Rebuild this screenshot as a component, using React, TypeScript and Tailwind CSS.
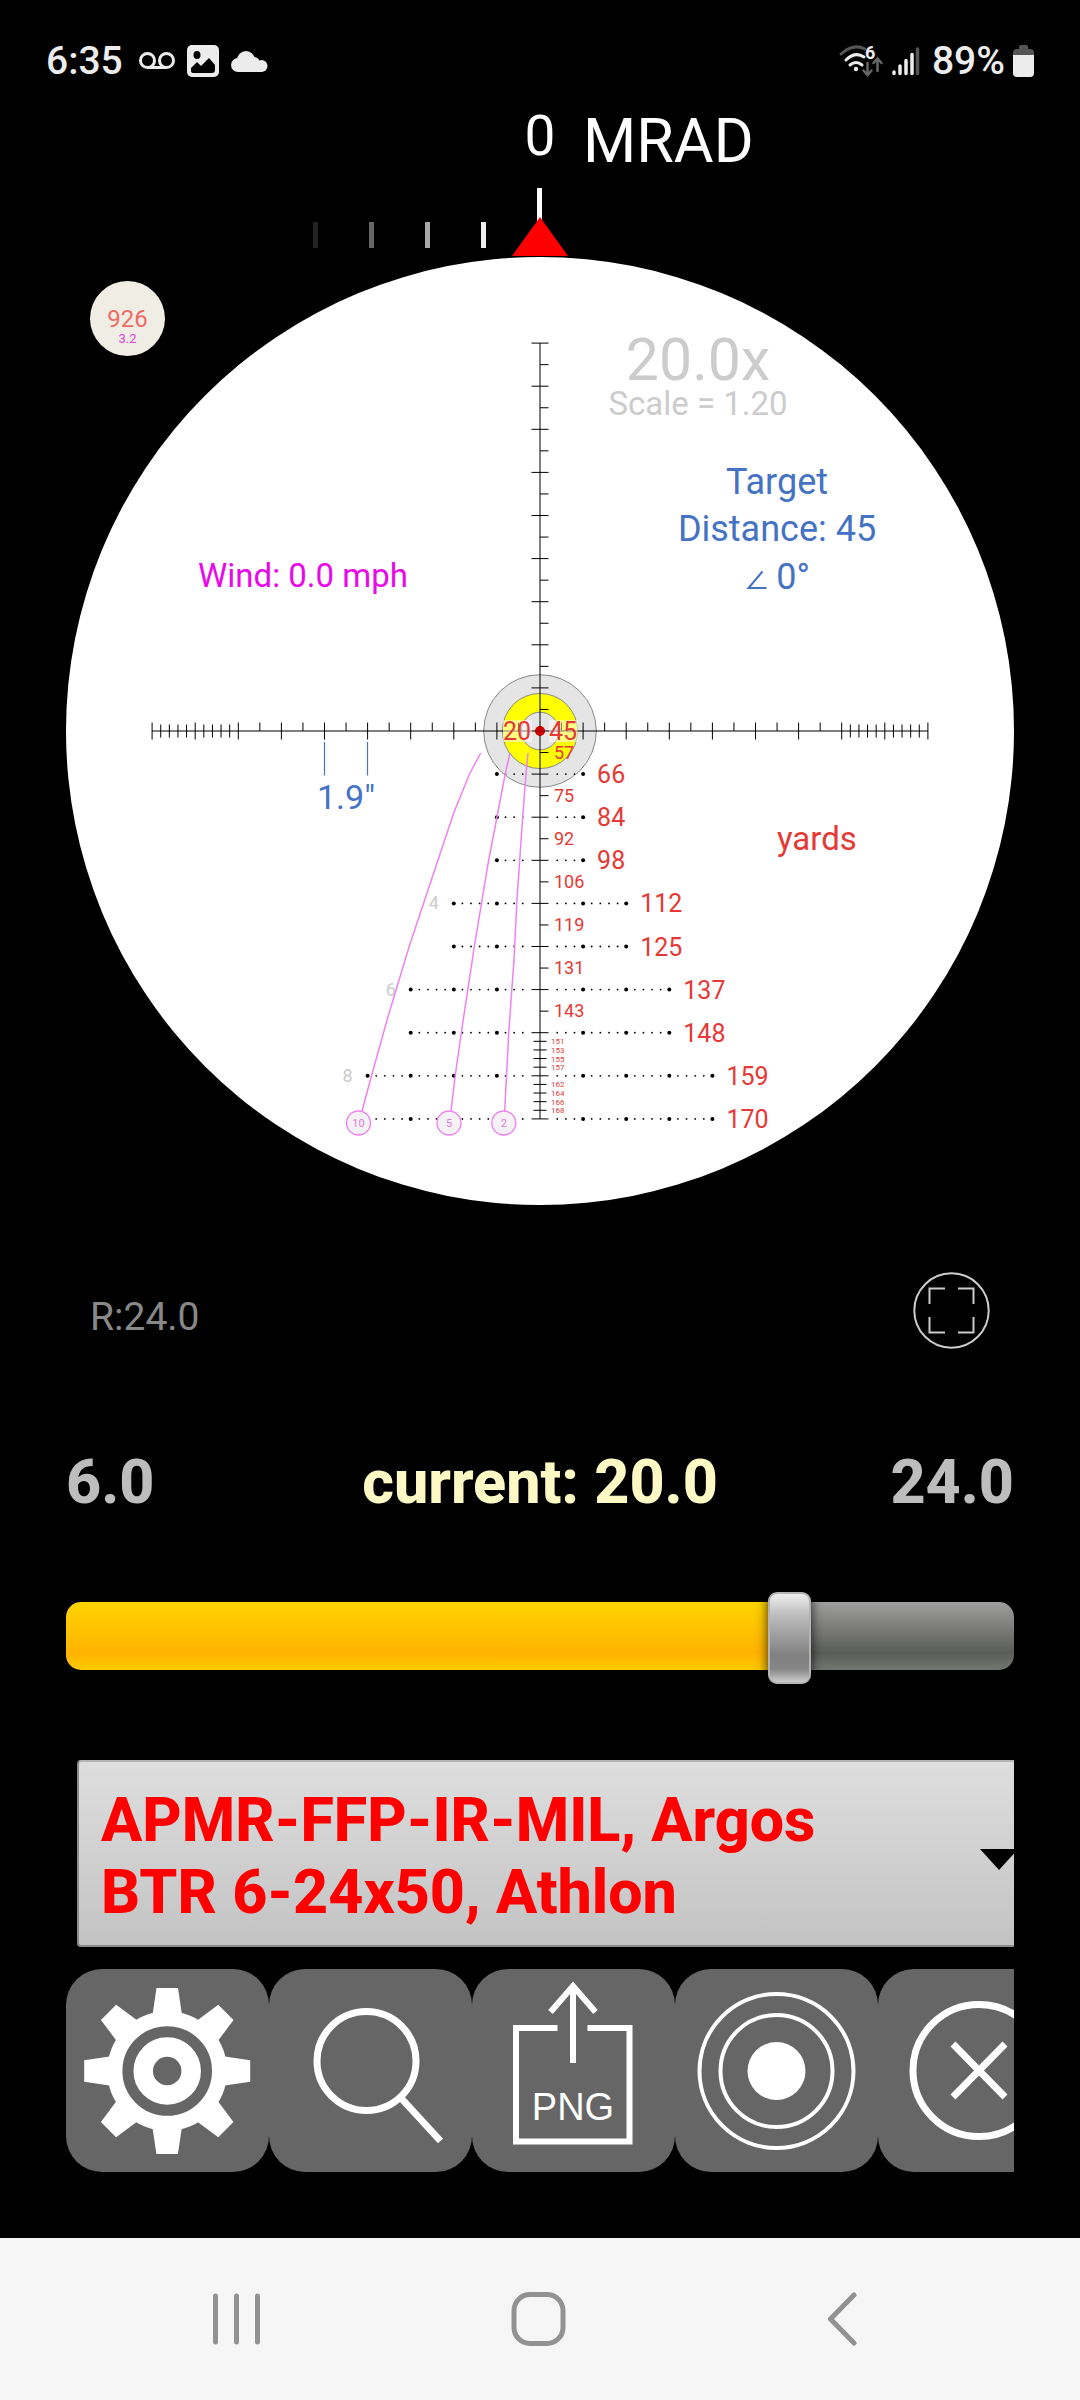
import { useState } from 'react';

const MIL = 43.1;
const CX = 540;
const CY = 731;

const holdovers = [
  { mil: 1, half: 1, range: 66 },
  { mil: 2, half: 1, range: 84 },
  { mil: 3, half: 1, range: 98 },
  { mil: 4, half: 2, range: 112, mark: 4 },
  { mil: 5, half: 2, range: 125 },
  { mil: 6, half: 3, range: 137, mark: 6 },
  { mil: 7, half: 3, range: 148 },
  { mil: 8, half: 4, range: 159, mark: 8 },
  { mil: 9, half: 4, range: 170 },
];

const halfRanges = [57, 75, 92, 106, 119, 131, 143];

const fineRanges = [
  { mil: 7.2, range: 151 },
  { mil: 7.4, range: 153 },
  { mil: 7.6, range: 155 },
  { mil: 7.8, range: 157 },
  { mil: 8.2, range: 162 },
  { mil: 8.4, range: 164 },
  { mil: 8.6, range: 166 },
  { mil: 8.8, range: 168 },
];

const windLines = [
  { mph: 10, x: 358.5, points: '480.7,753 469.5,774 453.7,813 425,899 409.3,946 388,1016.7 371.7,1075 362,1111' },
  { mph: 5, x: 449, points: '510,753 505,775 497,817 488.7,860 474.3,946.7 461.3,1032.7 455.3,1075 451,1111' },
  { mph: 2, x: 503.8, points: '528,753 526,774 522.7,817 517,899 514,960 508.7,1033 504.7,1111' },
];

const reticles = ['APMR-FFP-IR-MIL, Argos BTR 6-24x50, Athlon', 'APLR2-FFP-IR-MIL, Argos BTR 6-24x50, Athlon'];

function Crosshair() {
  const whole = [1, 2, 3, 4, 5, 6, 7, 8, 9];
  const fine = [7.2, 7.4, 7.6, 7.8, 8.2, 8.4, 8.6, 8.8];
  return (
    <g stroke="#000" strokeWidth="1">
      <line x1={CX} y1={CY - 9 * MIL} x2={CX} y2={CY + 9 * MIL} strokeWidth="2" strokeOpacity=".5" />
      <line x1={CX - 9 * MIL} y1={CY} x2={CX + 9 * MIL} y2={CY} strokeWidth="2" strokeOpacity=".5" />
      {whole.map((m) => (
        <g key={m}>
          <line x1="531.5" x2="548.5" y1={CY - m * MIL} y2={CY - m * MIL} />
          <line x1="531.5" x2="548.5" y1={CY + m * MIL} y2={CY + m * MIL} />
          <line y1="722.5" y2="739.5" x1={CX - m * MIL} x2={CX - m * MIL} />
          <line y1="722.5" y2="739.5" x1={CX + m * MIL} x2={CX + m * MIL} />
          <line x1="540" x2="548.5" y1={CY - (m - 0.5) * MIL} y2={CY - (m - 0.5) * MIL} />
          {m < 8 && (
            <>
              <line x1="540" x2="548.5" y1={CY + (m - 0.5) * MIL} y2={CY + (m - 0.5) * MIL} />
              <line y1="722.5" y2="731" x1={CX - (m - 0.5) * MIL} x2={CX - (m - 0.5) * MIL} />
              <line y1="722.5" y2="731" x1={CX + (m - 0.5) * MIL} x2={CX + (m - 0.5) * MIL} />
            </>
          )}
        </g>
      ))}
      {fine.map((m) => (
        <g key={m}>
          <line x1="533.5" x2="546.5" y1={CY + m * MIL} y2={CY + m * MIL} />
          <line y1="724.5" y2="737.5" x1={CX - m * MIL} x2={CX - m * MIL} />
          <line y1="724.5" y2="737.5" x1={CX + m * MIL} x2={CX + m * MIL} />
        </g>
      ))}
    </g>
  );
}

function HoldoverRow({ mil, half, range, mark }: { mil: number; half: number; range: number; mark?: number }) {
  const y = CY + mil * MIL;
  const dots: number[] = [];
  for (let i = 2; i <= half * 5; i++) dots.push(i);
  return (
    <g>
      {dots.map((i) => {
        const r = i % 5 === 0 ? 2 : 0.9;
        return (
          <g key={i}>
            <circle cx={CX - (i / 5) * MIL} cy={y} r={r} />
            <circle cx={CX + (i / 5) * MIL} cy={y} r={r} />
          </g>
        );
      })}
      <text x={CX + half * MIL + 14} y={y + 9} fontSize="25" fill="#e53935">{range}</text>
      {mark && (
        <text x={CX - half * MIL - 20} y={y + 6} fontSize="18" fill="#ccc" textAnchor="middle">{mark}</text>
      )}
    </g>
  );
}

function Scope() {
  return (
    <svg viewBox="0 104 1080 1106" className="block w-full" fontFamily="Roboto, sans-serif" role="img" aria-label="Reticle view">
      {/* turret scale */}
      <text x="540" y="155" fontSize="55" fill="#fff" textAnchor="middle">0</text>
      <text x="583" y="162" fontSize="61" fill="#fff">MRAD</text>
      <rect x="313" y="222" width="5" height="26" fill="#222" />
      <rect x="369" y="222" width="5" height="26" fill="#666" />
      <rect x="425" y="222" width="5" height="26" fill="#a8a8a8" />
      <rect x="481" y="222" width="5" height="26" fill="#eee" />
      <rect x="537" y="188" width="5" height="36" fill="#fff" />
      <circle cx={CX} cy={CY} r="474" fill="#fff" />
      <path d="M540 217 L568 256 H512 Z" fill="#f00" />

      {/* target */}
      <g stroke="#888" strokeWidth="1">
        <circle cx={CX} cy={CY} r="56.3" fill="#e5e5e5" />
        <circle cx={CX} cy={CY} r="37.6" fill="#ff0" />
        <circle cx={CX} cy={CY} r="18.8" fill="#e5e5e5" />
      </g>
      <circle cx={CX} cy={CY} r="5" fill="#d00" />

      <Crosshair />
      <circle cx={CX} cy={CY} r="4.5" fill="#c00" fillOpacity=".8" />
      {holdovers.map((h) => <HoldoverRow key={h.mil} {...h} />)}

      <rect x="503" y="720" width="29" height="22" fill="#fff" fillOpacity=".5" />
      <rect x="549" y="720" width="29" height="22" fill="#fff" fillOpacity=".5" />
      <g fill="#e53935">
        <text x="503" y="740" fontSize="25">20</text>
        <text x="549" y="740" fontSize="25">45</text>
        {halfRanges.map((r, i) => (
          <text key={r} x="554" y={CY + (i + 0.5) * MIL + 6} fontSize="18">{r}</text>
        ))}
        {fineRanges.map((f) => (
          <text key={f.mil} x="551" y={CY + f.mil * MIL + 3} fontSize="8">{f.range}</text>
        ))}
        <text x="777" y="850" fontSize="33">yards</text>
      </g>

      {/* wind drift */}
      {windLines.map((w) => (
        <g key={w.mph}>
          <polyline points={w.points} fill="none" stroke="#ee82ee" strokeWidth="1.5" />
          <circle cx={w.x} cy="1123" r="12" fill="#f4f2f4" stroke="#ee82ee" strokeWidth="1.3" />
          <text x={w.x} y="1127" fontSize="11" fill="#e07be0" textAnchor="middle">{w.mph}</text>
        </g>
      ))}
      <text x="198" y="587" fontSize="33" fill="#e808ea">Wind: 0.0 mph</text>

      <path d="M324.5 742 V775.5 M367.5 742 V775.5" stroke="#4a76b0" strokeWidth="1.2" />
      <g fill="#4472c4" textAnchor="middle">
        <text x="346" y="809" fontSize="34">1.9"</text>
        <text x="777" y="494" fontSize="36">Target</text>
        <text x="777" y="541" fontSize="36">Distance: 45</text>
        <text x="793" y="589" fontSize="36">0°</text>
      </g>
      <path d="M762.5 571.5 L748.5 588 H766.5" fill="none" stroke="#4472c4" strokeWidth="2" />
      <g fill="#ccc" textAnchor="middle">
        <text x="698" y="380" fontSize="59">20.0x</text>
        <text x="698" y="415" fontSize="33">Scale = 1.20</text>
      </g>
    </svg>
  );
}

function StatusBar() {
  return (
    <div className="flex h-[104px] items-center justify-between pt-[18px] pr-[46px] pl-[46px] text-[39px] leading-[48px] font-medium text-[#ececec]">
      <div className="flex items-center">
        <span>6:35</span>
        <svg width="36" height="18" viewBox="0 0 36 18" className="ml-4" fill="none" stroke="currentColor" strokeWidth="3">
          <circle cx="8.5" cy="8.5" r="7" />
          <circle cx="27.5" cy="8.5" r="7" />
          <path d="M8.5 15.5 H27.5" />
        </svg>
        <svg width="32" height="32" viewBox="0 0 32 32" className="ml-3">
          <rect width="32" height="32" rx="5" fill="currentColor" />
          <ellipse cx="10" cy="10" rx="3.5" ry="4" fill="#000" />
          <path d="M4 26 V23 L10 17 L14 21 L22 13 L28 20 V25 Q28 28 25 28 H6 Q4 28 4 26 Z" fill="#000" />
        </svg>
        <svg width="37" height="21" viewBox="0 0 37 21" className="ml-3" fill="currentColor">
          <circle cx="15" cy="9" r="9" />
          <circle cx="7" cy="14" r="7" />
          <circle cx="23" cy="12" r="6" />
          <circle cx="30.5" cy="15" r="6" />
          <rect x="7" y="12" width="24" height="9" />
        </svg>
      </div>
      <div className="flex items-center">
        <svg width="45" height="33" viewBox="0 0 45 33" className="overflow-visible" fill="none" strokeWidth="3" strokeLinecap="round">
          <path d="M2 9 Q14 -2 26 4" stroke="#555" />
          <path d="M7 15 Q16 6 25 12" stroke="currentColor" />
          <path d="M11 20 Q17 15 23 20" stroke="currentColor" />
          <circle cx="17" cy="24" r="2.2" fill="currentColor" />
          <path d="M28.5 18 V29 M24.5 25.5 L28.5 30 L32.5 25.5 M38.5 26 V14 M34.5 18 L38.5 13.5 L42.5 18" stroke="#666" strokeWidth="2.5" />
          <text x="26" y="14" fontSize="18" fontFamily="Roboto, sans-serif" fontWeight="700" fill="currentColor">6</text>
        </svg>
        <svg width="28" height="32" viewBox="0 0 28 32" className="ml-2" strokeWidth="3.5" strokeLinecap="round">
          <path d="M2 27 V28.5 M8 21 V28.5 M14 15.5 V28.5 M20 9.5 V28.5" stroke="currentColor" />
          <path d="M25.5 4 V28.5" stroke="#555" />
        </svg>
        <span className="ml-3">89%</span>
        <svg width="21" height="32" viewBox="0 0 21 32" className="ml-2">
          <path d="M6 4 V2 Q6 0 8 0 H13 Q15 0 15 2 V4 H17 Q21 4 21 8 V12 H0 V8 Q0 4 4 4 Z" fill="#555" />
          <path d="M0 10 H21 V28 Q21 32 17 32 H4 Q0 32 0 28 Z" fill="currentColor" />
        </svg>
      </div>
    </div>
  );
}

function GearIcon() {
  return (
    <svg viewBox="0 0 203 203" fill="#fff">
      {[0, 45, 90, 135, 180, 225, 270, 315].map((a) => (
        <path key={a} d="M90.5 19 H112 L116 46 H86.5 Z" transform={`rotate(${a} 101.2 102)`} />
      ))}
      <circle cx="101.2" cy="102" r="52.3" fill="none" stroke="#fff" strokeWidth="15" />
      <circle cx="101.2" cy="102" r="24" fill="none" stroke="#fff" strokeWidth="19.5" />
    </svg>
  );
}

function SearchIcon() {
  return (
    <svg viewBox="0 0 203 203" fill="none" stroke="#fff" strokeWidth="7">
      <circle cx="97.5" cy="92" r="49.5" />
      <path d="M132 129 L171.5 172" />
    </svg>
  );
}

function ExportIcon() {
  return (
    <svg viewBox="0 0 203 203" fill="none" stroke="#fff" strokeWidth="6">
      <path d="M85.5 59 H44 V172.5 H157.5 V59 H115.5" />
      <path d="M101 94 V18 M78.5 43 L101 17 L123.5 43" />
      <text x="101" y="151" fontSize="38" fontFamily="'Liberation Sans', sans-serif" fill="#fff" stroke="none" textAnchor="middle">PNG</text>
    </svg>
  );
}

function RecordIcon() {
  return (
    <svg viewBox="0 0 203 203" fill="none" stroke="#fff" strokeWidth="4">
      <circle cx="101.5" cy="102" r="77" />
      <circle cx="101.5" cy="102" r="56" />
      <circle cx="101.5" cy="102" r="29" fill="#fff" stroke="none" />
    </svg>
  );
}

function CloseIcon() {
  return (
    <svg viewBox="0 0 203 203" fill="none" stroke="#fff" strokeWidth="7">
      <circle cx="101" cy="101.5" r="66" />
      <path d="M75 75 L127 128 M127 75 L75 128" />
    </svg>
  );
}

const tools = [
  { label: 'Settings', Icon: GearIcon },
  { label: 'Search', Icon: SearchIcon },
  { label: 'Export PNG', Icon: ExportIcon },
  { label: 'Target', Icon: RecordIcon },
  { label: 'Close', Icon: CloseIcon },
];

export default function App() {
  const [zoom, setZoom] = useState(19.96);
  const [reticle, setReticle] = useState(reticles[0]);
  const filled = ((zoom - 6) / 18) * 100;

  return (
    <div className="flex min-h-screen w-full flex-col overflow-hidden bg-black font-['Roboto',sans-serif]">
      <StatusBar />

      <div className="relative">
        <Scope />
        <button className="absolute top-[177px] left-[90px] flex size-[75px] flex-col items-center rounded-full bg-[#f0ede4] pt-[26px]">
          <span className="text-[24px] leading-[24px] text-[#ef6c66]">926</span>
          <span className="text-[13px] leading-[16px] text-[#e040e0]">3.2</span>
        </button>
      </div>

      <div className="flex items-end justify-between px-[90px] pt-[62px]">
        <span className="text-[39px] leading-[64px] text-[#888]">R:24.0</span>
        <button aria-label="Full screen">
          <svg width="77" height="77" viewBox="0 0 77 77" fill="none" stroke="#ccc" strokeWidth="2">
            <circle cx="38.5" cy="38.5" r="37.2" />
            <path d="M16.5 32 V16.5 H32 M45 16.5 H60.5 V32 M60.5 45 V60.5 H45 M32 60.5 H16.5 V45" />
          </svg>
        </button>
      </div>

      <div className="flex flex-col px-[66px] pt-[97px]">
        <label htmlFor="zoom" className="grid grid-cols-[1fr_auto_1fr] text-[61px] leading-[72px] font-extrabold text-[#bdbdbd]">
          <span>6.0</span>
          <span className="text-[#fcf9c4]">current: {zoom.toFixed(1)}</span>
          <span className="text-right">24.0</span>
        </label>
        <input
          id="zoom"
          type="range"
          min="6"
          max="24"
          step="0.01"
          value={zoom}
          onChange={(e) => setZoom(Number(e.target.value))}
          className="mt-[84px] h-[68px] w-full appearance-none rounded-[15px] bg-no-repeat [&::-webkit-slider-thumb]:mt-[4px] [&::-webkit-slider-thumb]:h-[92px] [&::-webkit-slider-thumb]:w-[43px] [&::-webkit-slider-thumb]:appearance-none [&::-webkit-slider-thumb]:rounded-[9px] [&::-webkit-slider-thumb]:border-2 [&::-webkit-slider-thumb]:border-[#b4b4b4] [&::-webkit-slider-thumb]:bg-[linear-gradient(#eee,#bbb_25%,#808080_70%,#858585_85%,#ccc)] [&::-webkit-slider-thumb]:shadow-[0_0_12px_rgba(0,0,0,0.8)]"
          style={{
            backgroundImage:
              'linear-gradient(#ffd400, #ffb300 75%, #ffca00), linear-gradient(#9e9e9e, #5a5c57 75%, #747673)',
            backgroundSize: `${filled}% 100%, 100% 100%`,
          }}
        />

        <div className="relative mt-[90px] ml-[11px] overflow-hidden rounded-l-[4px] border-y-2 border-l-2 border-[#8c8c8c] border-t-[#b5b5b5] bg-linear-to-b from-[#dedede] to-[#c3c3c3] pt-[22px] pb-[17px] pl-[22px]">
          <div aria-hidden="true" className="max-w-[780px] text-[61px] leading-[72px] font-extrabold text-[#f00]">{reticle}</div>
          <svg width="38" height="22" viewBox="0 0 38 22" className="absolute top-[87px] -right-1">
            <path d="M0 0 H38 L19 21 Z" fill="#000" />
          </svg>
          <select
            aria-label="Reticle"
            value={reticle}
            onChange={(e) => setReticle(e.target.value)}
            className="absolute inset-0 size-full opacity-0"
          >
            {reticles.map((r) => <option key={r}>{r}</option>)}
          </select>
        </div>

        <div className="mt-[22px] flex overflow-hidden">
          {tools.map(({ label, Icon }) => (
            <button key={label} aria-label={label} className="size-[203px] shrink-0 rounded-[36px] bg-[#666]">
              <Icon />
            </button>
          ))}
        </div>
      </div>

      <nav className="mt-auto flex h-[162px] items-center bg-[#f6f6f6] px-[85px]">
        <button aria-label="Recent apps" className="flex flex-1 justify-center">
          <svg width="54" height="54" viewBox="0 0 54 54" stroke="#929292" strokeWidth="5" strokeLinecap="round">
            <path d="M5.5 4 V50 M26.5 4 V50 M47.5 4 V50" />
          </svg>
        </button>
        <button aria-label="Home" className="flex flex-1 justify-center">
          <svg width="58" height="54" viewBox="0 0 58 54" fill="none" stroke="#929292" strokeWidth="5">
            <rect x="3" y="2.5" width="49" height="49" rx="16" />
          </svg>
        </button>
        <button aria-label="Back" className="flex flex-1 justify-center">
          <svg width="30" height="54" viewBox="0 0 30 54" fill="none" stroke="#929292" strokeWidth="5" strokeLinecap="round" strokeLinejoin="round">
            <path d="M26 3 L2.5 27 L26 51" />
          </svg>
        </button>
      </nav>
    </div>
  );
}
